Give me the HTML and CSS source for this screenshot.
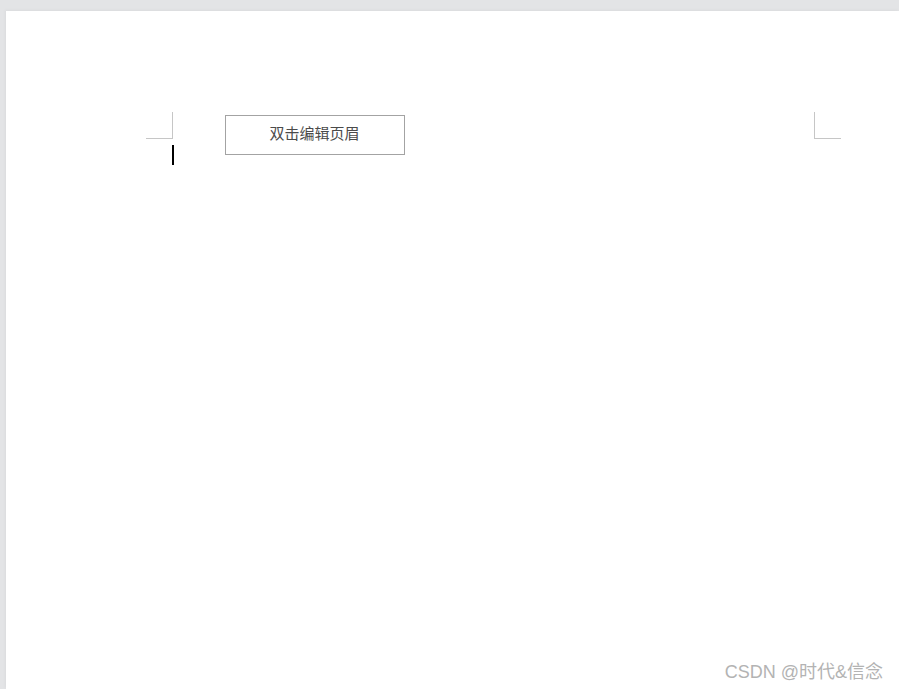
FILE: index.html
```html
<!DOCTYPE html>
<html lang="zh-CN">
<head>
    <meta charset="UTF-8">
    <title>双击编辑页眉</title>
    <link rel="stylesheet" href="styles.css">
</head>
<body>
    <div class="page">
        <div class="header-row">
            <div class="left-col">
                <div class="corner corner-left"></div>
                <div class="caret"></div>
            </div>
            <div class="header-box">双击编辑页眉</div>
            <div class="corner corner-right"></div>
        </div>
        <div class="watermark">CSDN @时代&amp;信念</div>
    </div>
</body>
</html>
```

FILE: styles.css
```css
* {
    margin: 0;
    padding: 0;
    box-sizing: border-box;
}

body {
    background: #e3e4e6;
    font-family: 'Liberation Sans', 'Noto Sans CJK SC', sans-serif;
    height: 689px;
    overflow: hidden;
}

/* Page sheet */
.page {
    position: relative;
    margin: 11px 0 0 6px;
    height: 678px;
    background: #fff;
    padding: 101px 58px 0 140px;
    box-shadow: -1px -1px 3px rgba(0, 0, 0, 0.04);
}

.header-row {
    display: flex;
    align-items: flex-start;
}

.left-col {
    display: flex;
    flex-direction: column;
}

/* Margin corner marks */
.corner {
    width: 27px;
    height: 27px;
    border-bottom: 1px solid #c6c6c6;
}

.corner-left {
    border-right: 1px solid #c6c6c6;
}

.corner-right {
    margin-left: auto;
    border-left: 1px solid #c6c6c6;
}

.caret {
    width: 2px;
    height: 20px;
    margin: 6px 0 0 26px;
    background: #000;
}

/* Header placeholder */
.header-box {
    width: 180px;
    height: 40px;
    margin: 3px 0 0 51px;
    border: 1px solid #a3a3a3;
    display: flex;
    align-items: center;
    justify-content: center;
    font-size: 15px;
    color: #4a4a4a;
    padding: 0 1px 5px 0;
}

.watermark {
    position: absolute;
    right: 16px;
    bottom: 6px;
    font-size: 18px;
    color: #b3b3b3;
}
```
